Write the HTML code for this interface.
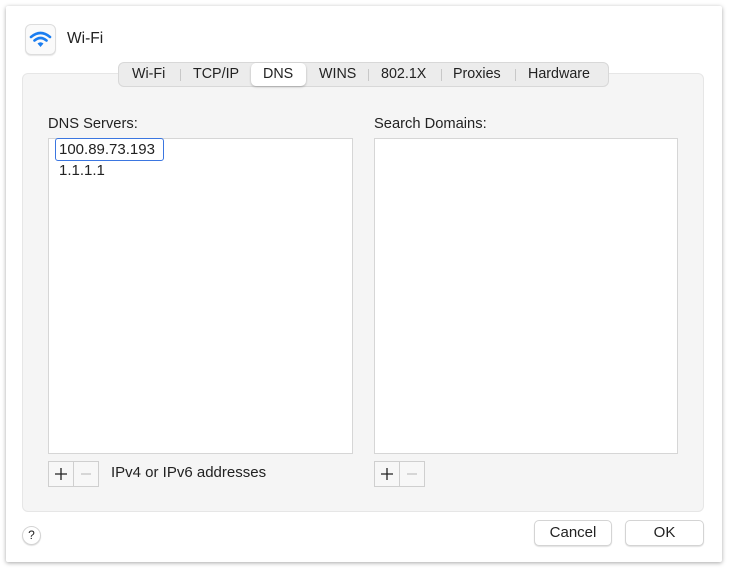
<!DOCTYPE html>
<html><head><style>
body{margin:0;width:730px;height:571px;background:#fff;font-family:"Liberation Sans",sans-serif;color:#222;position:relative;overflow:hidden}
.abs{position:absolute}
.win{left:6px;top:6px;width:716px;height:556px;background:#fff;box-shadow:0 1px 4px rgba(0,0,0,.35);border-radius:2px}
.panel{left:22px;top:73px;width:680px;height:437px;background:#f5f5f5;border:1px solid #e6e6e6;border-radius:6px}
.tabs{left:118px;top:62px;width:489px;height:23px;background:#ececec;border:1px solid #d8d8d8;border-radius:6px;font-size:14.3px}
.tab{position:absolute;top:3px}
.sep{position:absolute;top:6px;width:1px;height:12px;background:#c8c8c8}
.sel{left:132px;top:0px;width:55px;height:23px;background:#fff;border-radius:5px;box-shadow:0 1px 2px rgba(0,0,0,.25)}
.list{background:#fff;border:1px solid #d6d6d6}
.lbl{font-size:14.7px}
.btn{background:#fff;border:1px solid #d4d4d4;border-radius:5px;box-shadow:0 1px 1px rgba(0,0,0,.12);font-size:15px;text-align:center;line-height:24px}
.pm{width:24px;height:24px;border:1px solid #cfcfcf;background:#f7f7f7}
</style></head><body>
<div class="abs win"></div>
<div class="abs" style="left:25px;top:24px;width:29px;height:29px;border:1px solid #ddd;border-radius:6px;background:#fafafa;box-shadow:0 1px 1px rgba(0,0,0,.1)">
<svg width="29" height="29" viewBox="0 0 29 29"><g fill="none" stroke="#1a7df0" stroke-width="2.6" stroke-linecap="round"><path d="M5 12 Q14.5 4 24 12"/><path d="M8.5 15.5 Q14.5 10.5 20.5 15.5"/></g><path d="M11.5 18.5 Q14.5 16 17.5 18.5 L14.5 22 Z" fill="#1a7df0"/></svg></div>
<div class="abs" style="left:67px;top:30px;font-size:15.5px">Wi-Fi</div>
<div class="abs panel"></div>
<div class="abs tabs">
<div class="abs sel"></div>
<span class="tab" style="left:13px">Wi-Fi</span><div class="sep" style="left:61px"></div>
<span class="tab" style="left:74px">TCP/IP</span>
<span class="tab" style="left:144px">DNS</span>
<span class="tab" style="left:200px">WINS</span><div class="sep" style="left:249px"></div>
<span class="tab" style="left:262px">802.1X</span><div class="sep" style="left:322px"></div>
<span class="tab" style="left:334px">Proxies</span><div class="sep" style="left:396px"></div>
<span class="tab" style="left:409px">Hardware</span>
</div>
<div class="abs lbl" style="left:48px;top:116px">DNS Servers:</div>
<div class="abs lbl" style="left:374px;top:116px">Search Domains:</div>
<div class="abs list" style="left:48px;top:138px;width:303px;height:314px"></div>
<div class="abs list" style="left:374px;top:138px;width:302px;height:314px"></div>
<div class="abs" style="left:55px;top:138px;width:107px;height:21px;border:1.5px solid #3b76e0;border-radius:3px;background:#fff"></div>
<div class="abs" style="left:59px;top:141px;font-size:15px">100.89.73.193</div>
<div class="abs" style="left:59px;top:162px;font-size:15px">1.1.1.1</div>
<div class="abs pm" style="left:48px;top:461px"><svg width="24" height="24"><path d="M12 6V18M6 12H18" stroke="#222" stroke-width="1.3"/></svg></div>
<div class="abs pm" style="left:73px;top:461px"><svg width="24" height="24"><path d="M7 12H17" stroke="#c4c4c4" stroke-width="1.3"/></svg></div>
<div class="abs" style="left:111px;top:464px;font-size:15px">IPv4 or IPv6 addresses</div>
<div class="abs pm" style="left:374px;top:461px"><svg width="24" height="24"><path d="M12 6V18M6 12H18" stroke="#222" stroke-width="1.3"/></svg></div>
<div class="abs pm" style="left:399px;top:461px"><svg width="24" height="24"><path d="M7 12H17" stroke="#c4c4c4" stroke-width="1.3"/></svg></div>
<div class="abs btn" style="left:534px;top:520px;width:76px;height:24px">Cancel</div>
<div class="abs btn" style="left:625px;top:520px;width:77px;height:24px">OK</div>
<div class="abs btn" style="left:22px;top:526px;width:17px;height:17px;border-radius:50%;line-height:17px;font-size:12px">?</div>
</body></html>
